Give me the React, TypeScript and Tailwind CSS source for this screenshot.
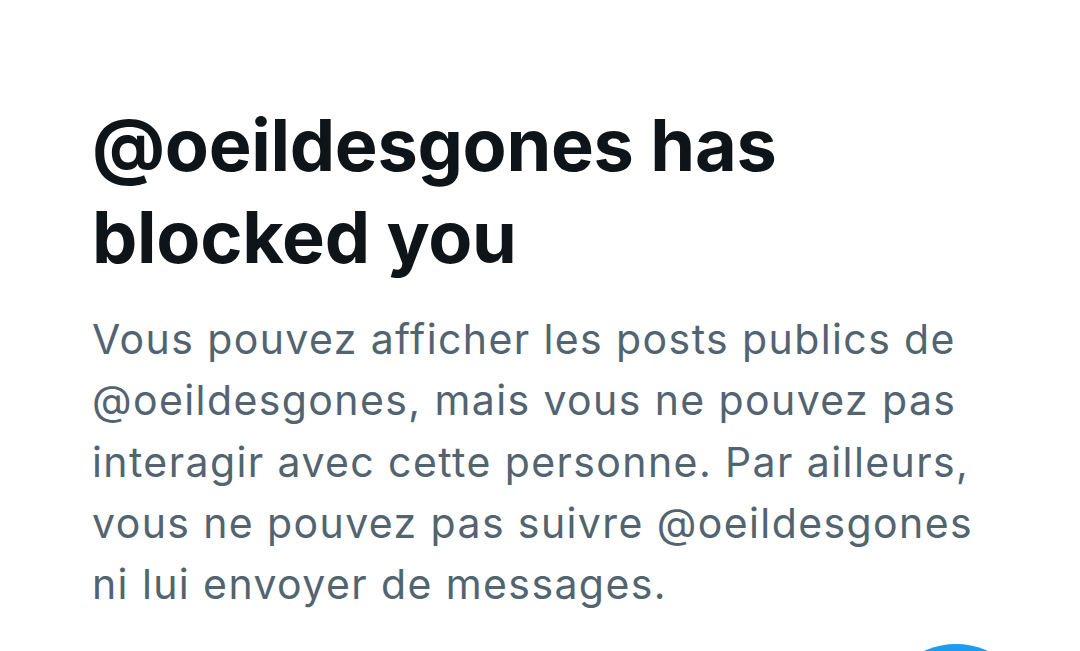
export default function App() {
  return (
    <main className="relative h-[651px] w-[1080px] overflow-hidden bg-white" style={{ fontFamily: 'Inter, "Open Sans", sans-serif' }}>
      <div className="pl-[92px] pr-[80px] pt-[99px]">
        <h1 className="text-[72px] font-bold leading-[92px] tracking-[-0.3px] text-[#0f1419]">
          @oeildesgones has
          <br />
          blocked you
        </h1>
        <p className="mt-[26px] text-[41px] leading-[61.25px] tracking-[1.4px] text-[#536471]">
          Vous pouvez afficher les posts publics de
          <br />
          @oeildesgones, mais vous ne pouvez pas
          <br />
          interagir avec cette personne. Par ailleurs,
          <br />
          vous ne pouvez pas suivre @oeildesgones
          <br />
          ni lui envoyer de messages.
        </p>
      </div>
      <div className="absolute left-[880px] top-[644px] h-[152px] w-[152px] rounded-full bg-[#1d9bf0]" />
    </main>
  )
}
